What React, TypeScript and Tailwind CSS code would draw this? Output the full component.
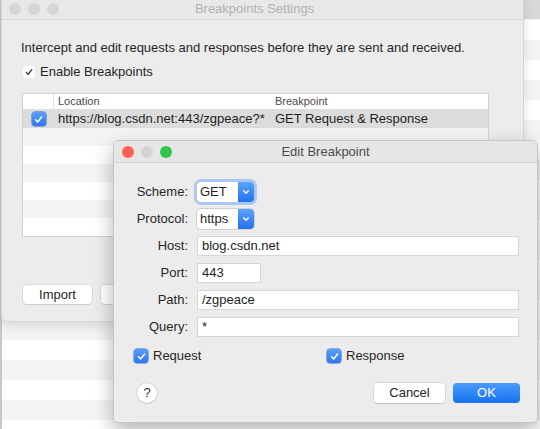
import type { ReactNode } from "react";

const font = { fontFamily: '"Liberation Sans", Arial, sans-serif' };

function Dot({ color }: { color: string }) {
  return <span className={`block w-[12px] h-[12px] rounded-full ${color}`} />;
}

function Check({ className = "" }: { className?: string }) {
  return (
    <svg viewBox="0 0 12 12" className={className} fill="none" stroke="currentColor" strokeWidth="1.6" strokeLinecap="round" strokeLinejoin="round">
      <path d="M2.8 6.4 5 8.8 9.4 3.2" />
    </svg>
  );
}

function BlueBox() {
  return (
    <span className="flex items-center justify-center w-[14px] h-[14px] rounded-[3px] bg-[linear-gradient(#5a9cf8,#2f78ee)] text-white shadow-[0_0_0_0.5px_#2a66c8]">
      <Check className="w-[11px] h-[11px]" />
    </span>
  );
}

function Chevron() {
  return (
    <svg viewBox="0 0 10 10" className="w-[8px] h-[8px]" fill="none" stroke="white" strokeWidth="1.6" strokeLinecap="round" strokeLinejoin="round">
      <path d="M2 3.5 5 6.5 8 3.5" />
    </svg>
  );
}

function Select({ value, focused }: { value: string; focused?: boolean }) {
  return (
    <div
      className={`flex w-[57px] h-[20px] rounded-[4px] bg-white shadow-[0_0_0_1px_#cfcfcf] ${
        focused ? "ring-[3px] ring-[#a9c8f2]" : ""
      }`}
    >
      <span className="flex-1 pl-[3px] leading-[20px] text-[13px] text-[#1e1e1e]">{value}</span>
      <span className="flex items-center justify-center w-[16px] rounded-r-[4px] bg-[linear-gradient(#5ba3fb,#2370ee)]">
        <Chevron />
      </span>
    </div>
  );
}

function Field({ value, width = "w-full" }: { value: string; width?: string }) {
  return (
    <div className={`${width} h-[20px] bg-white border border-[#d6d6d6] pl-[4px] leading-[18px] text-[13px] text-[#1e1e1e]`}>
      {value}
    </div>
  );
}

function Row({ label, children }: { label: string; children: ReactNode }) {
  return (
    <div className="grid grid-cols-[74px_1fr] gap-x-[9px] items-center h-[20px]">
      <span className="text-right text-[13px] text-[#262626]">{label}</span>
      <div className="flex">{children}</div>
    </div>
  );
}

export default function App() {
  const stripes = Array.from({ length: 6 });

  return (
    <div
      className="relative w-[540px] h-[429px] overflow-hidden bg-[repeating-linear-gradient(#f4f4f4_0px,#f4f4f4_20px,#ffffff_20px,#ffffff_40px)]"
      style={font}
    >
      <div className="absolute left-0 top-0 w-[2px] h-full bg-[#c8c8c8]" />
      <div className="absolute right-0 top-0 w-[18px] h-[19px] bg-[#d8d8d8]" />

      {/* settings window, behind */}
      <div className="absolute left-[1px] top-[-3px] w-[523px] h-[325px] rounded-[5px] bg-[#ececec] border border-[#d4d4d4] shadow-[0_4px_12px_rgba(0,0,0,0.12)] overflow-hidden">
        <div className="relative flex items-center h-[22px] bg-[#e8e8e8] border-b border-[#d9d9d9]">
          <div className="flex gap-[7px] pl-[7px]">
            <Dot color="bg-[#d6d6d6]" />
            <Dot color="bg-[#d6d6d6]" />
            <Dot color="bg-[#d6d6d6]" />
          </div>
          <span className="absolute inset-0 flex items-center justify-center pr-[16px] text-[13px] text-[#b2b2b2]">
            Breakpoints Settings
          </span>
        </div>

        <div className="pl-[19px] pr-[34px]">
          <p className="mt-[20px] leading-[16px] text-[13px] text-[#262626]">
            Intercept and edit requests and responses before they are sent and received.
          </p>
          <div className="flex items-center gap-[5px] mt-[8px] h-[16px] pl-[2px]">
            <span className="flex items-center justify-center w-[12px] h-[12px] rounded-[2px] bg-white text-[#333]">
              <Check className="w-[10px] h-[10px]" />
            </span>
            <span className="text-[13px] text-[#262626]">Enable Breakpoints</span>
          </div>

          <div className="mt-[13px] ml-[1px] w-[467px] h-[144px] bg-white border border-[#d2d2d2] overflow-hidden">
            <div className="flex h-[16px] border-b border-[#dedede] text-[11px] leading-[15px] text-[#4a4a4a]">
              <span className="w-[31px] border-r border-[#e2e2e2]" />
              <span className="w-[217px] pl-[4px]">Location</span>
              <span className="pl-[4px]">Breakpoint</span>
            </div>
            <div className="flex items-center h-[18px] bg-[#dcdcdc] text-[13px] text-[#1e1e1e]">
              <span className="flex justify-center w-[31px]">
                <BlueBox />
              </span>
              <span className="w-[217px] pl-[4px]">https://blog.csdn.net:443/zgpeace?*</span>
              <span className="pl-[4px]">GET Request &amp; Response</span>
            </div>
            {stripes.map((_, i) => (
              <div key={i} className={`h-[18px] ${i % 2 === 0 ? "bg-[#f4f4f4]" : "bg-white"}`} />
            ))}
          </div>

          <div className="flex gap-[9px] mt-[48px] ml-[2px]">
            <button className="w-[69px] h-[19px] rounded-[4px] bg-white shadow-[0_0_0_0.5px_#c9c9c9,0_1px_1px_rgba(0,0,0,0.12)] text-[13px] text-[#262626]">
              Import
            </button>
            <button className="w-[69px] h-[19px] rounded-[4px] bg-white shadow-[0_0_0_0.5px_#c9c9c9,0_1px_1px_rgba(0,0,0,0.12)]" />
          </div>
        </div>
      </div>

      {/* edit dialog, in front */}
      <div className="absolute left-[113px] top-[140px] w-[425px] h-[283px] rounded-[5px] bg-[#ececec] border border-[#c6c6c6] shadow-[0_8px_20px_rgba(0,0,0,0.3)] overflow-hidden">
        <div className="relative flex items-center h-[22px] bg-[#e6e6e6] border-b border-[#d2d2d2]">
          <div className="flex gap-[7px] pl-[8px]">
            <Dot color="bg-[#fc5d57]" />
            <Dot color="bg-[#d3d3d3]" />
            <Dot color="bg-[#30c647]" />
          </div>
          <span className="absolute inset-0 flex items-center justify-center text-[13px] text-[#4b4b4b]">
            Edit Breakpoint
          </span>
        </div>

        <div className="flex flex-col gap-[7px] mt-[19px] pr-[18px]">
          <Row label="Scheme:">
            <Select value="GET" focused />
          </Row>
          <Row label="Protocol:">
            <Select value="https" />
          </Row>
          <Row label="Host:">
            <Field value="blog.csdn.net" />
          </Row>
          <Row label="Port:">
            <Field value="443" width="w-[64px]" />
          </Row>
          <Row label="Path:">
            <Field value="/zgpeace" />
          </Row>
          <Row label="Query:">
            <Field value="*" />
          </Row>
        </div>

        <div className="flex mt-[12px] pl-[20px] h-[14px] text-[13px] text-[#262626]">
          <label className="flex items-center gap-[5px] w-[193px]">
            <BlueBox />
            Request
          </label>
          <label className="flex items-center gap-[5px]">
            <BlueBox />
            Response
          </label>
        </div>

        <div className="flex items-center mt-[20px] pl-[23px] pr-[17px] h-[20px]">
          <span className="flex items-center justify-center w-[20px] h-[20px] rounded-full bg-white shadow-[0_0_0_0.5px_#c4c4c4,0_1px_1px_rgba(0,0,0,0.15)] text-[13px] text-[#333]">
            ?
          </span>
          <div className="flex gap-[8px] ml-auto">
            <button className="w-[71px] h-[20px] rounded-[4px] bg-white shadow-[0_0_0_0.5px_#c4c4c4,0_1px_1px_rgba(0,0,0,0.15)] text-[13px] text-[#262626]">
              Cancel
            </button>
            <button className="w-[67px] h-[20px] rounded-[4px] bg-[linear-gradient(#4b9bfb,#1572ef)] text-[13px] text-white">
              OK
            </button>
          </div>
        </div>
      </div>
    </div>
  );
}
